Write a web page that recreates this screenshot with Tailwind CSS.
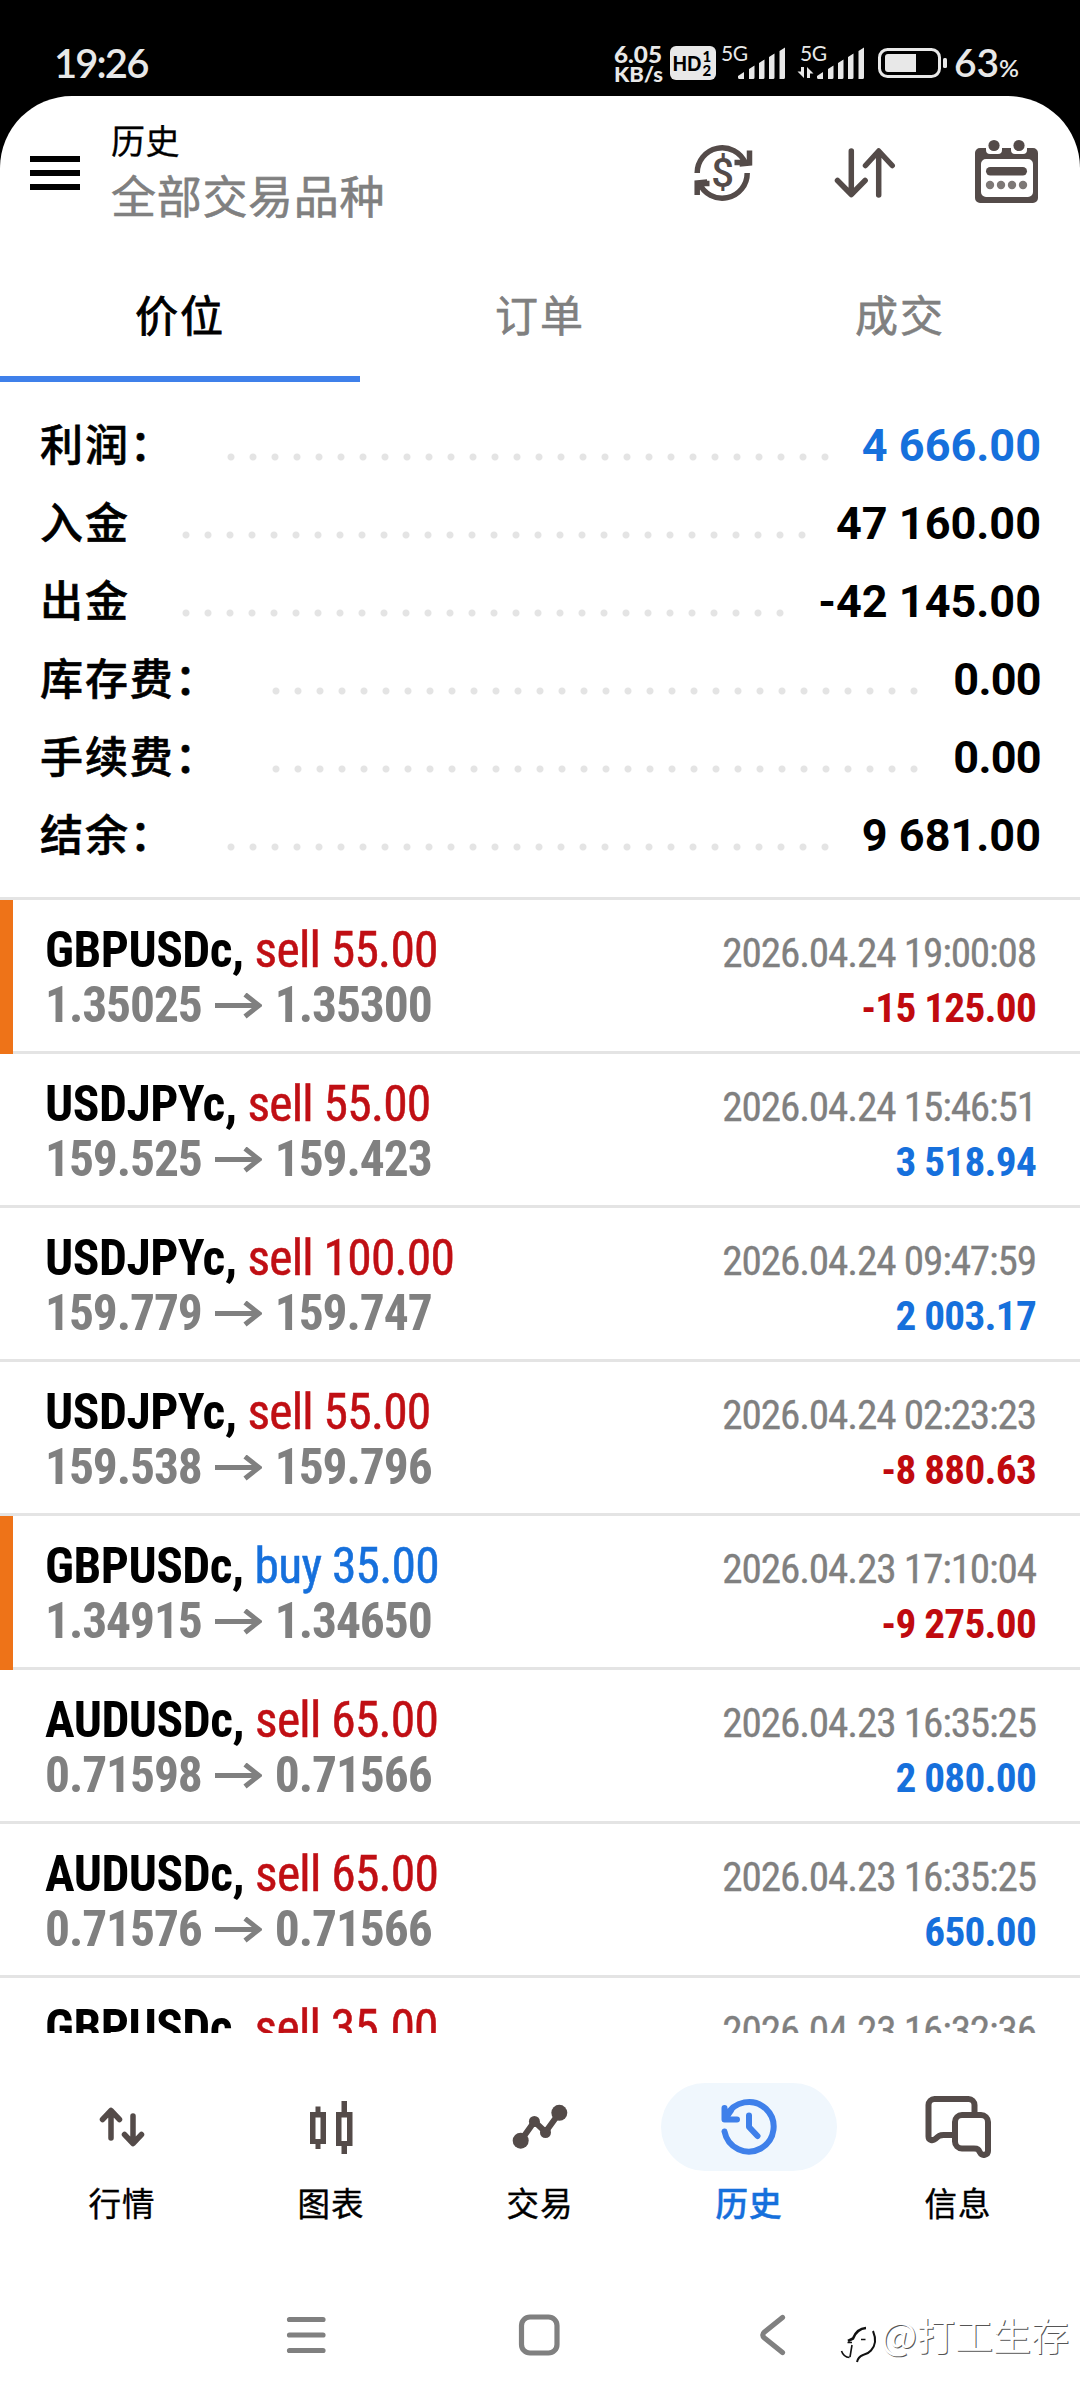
<!DOCTYPE html>
<html lang="zh-CN">
<head>
<meta charset="utf-8">
<title>历史</title>
<script src="https://cdn.jsdelivr.net/npm/@tailwindcss/browser@4"></script>
</head>
<body class="bg-black">
<div class="flex h-[2400px] w-[1080px] flex-col overflow-hidden bg-black font-['Noto_Sans_CJK_SC',sans-serif] text-black">

  <!-- Status bar -->
  <div class="flex h-[96px] shrink-0 items-start justify-between pl-[54px] text-[#e8e8e8]">
    <span class="pt-[39px] font-['Lato','Open_Sans',sans-serif] text-[40px] leading-[48px] font-semibold tracking-[-1.9px]">19:26</span>
    <svg class="h-[96px] w-[480px]" viewBox="600 0 480 96" fill="#e8e8e8">
      <g font-family="Lato, sans-serif" font-weight="900">
        <text x="614" y="63" font-size="23" textLength="48" lengthAdjust="spacingAndGlyphs">6.05</text>
        <text x="614" y="81.500" font-size="20.500" textLength="49" lengthAdjust="spacingAndGlyphs">KB/s</text>
      </g>
      <rect x="670" y="46" width="46" height="34" rx="6"/>
      <g font-family="Lato, sans-serif" font-weight="900" fill="#000">
        <text x="672.500" y="70.500" font-size="20.500" textLength="29" lengthAdjust="spacingAndGlyphs">HD</text>
        <text x="702.500" y="62" font-size="15">1</text>
        <text x="702.500" y="76" font-size="15">2</text>
      </g>
      <g font-family="Lato, sans-serif" font-weight="400" font-size="21">
        <text x="721" y="61" textLength="27">5G</text>
        <text x="800" y="61" textLength="27">5G</text>
      </g>
      <path d="M738 76l6-4v7h-4.500a1.500 1.500 0 0 1-1.500-1.500zM749 69l5.500-3.500V77.500a1.500 1.500 0 0 1-1.500 1.500h-4zM759 63l5.500-3.500V77.500a1.500 1.500 0 0 1-1.500 1.500h-4zM769 57l5.500-3.500V77.500a1.500 1.500 0 0 1-1.500 1.500h-4zM779.500 51l5.500-3.500V77.500a1.500 1.500 0 0 1-1.500 1.500h-4z"/>
      <path d="M817 76l6-4v7h-4.500a1.500 1.500 0 0 1-1.500-1.500zM828 69l5.500-3.500V77.500a1.500 1.500 0 0 1-1.500 1.500h-4zM838 63l5.500-3.500V77.500a1.500 1.500 0 0 1-1.500 1.500h-4zM848 57l5.500-3.500V77.500a1.500 1.500 0 0 1-1.500 1.500h-4zM858.500 51l5.500-3.500V77.500a1.500 1.500 0 0 1-1.500 1.500h-4z"/>
      <path d="M801 67h3v11l-6.500-6.500h3.500zM807 78h3v-4.500h3.500L807 67z"/>
      <rect x="879.500" y="49.500" width="60" height="27" rx="8" fill="none" stroke="#e8e8e8" stroke-width="3"/>
      <path d="M888 54h28v18h-28a3 3 0 0 1-3-3V57a3 3 0 0 1 3-3z"/>
      <rect x="943" y="58" width="4" height="10" rx="1.500"/>
      <g font-family="Lato, sans-serif" font-weight="600">
        <text x="954" y="77" font-size="39" textLength="45">63</text>
        <text x="999" y="77" font-size="23" textLength="20" lengthAdjust="spacingAndGlyphs">%</text>
      </g>
    </svg>
  </div>

  <div class="flex flex-1 flex-col overflow-hidden rounded-t-[72px] bg-white">
    <!-- App bar -->
    <header class="flex h-[160px] shrink-0 items-start">
      <div class="mt-[60px] ml-[30px] flex w-[50px] flex-col gap-2">
        <div class="h-[6px] bg-black"></div>
        <div class="h-[6px] bg-black"></div>
        <div class="h-[6px] bg-black"></div>
      </div>
      <div class="ml-[31px] flex flex-1 flex-col gap-[6px] pt-[23px]">
        <h1 class="text-[34px] leading-[42px] tracking-[0.5px] [-webkit-text-stroke:0.3px]">历史</h1>
        <p class="text-[45px] leading-[56px] tracking-[0.7px] text-[#808080] [-webkit-text-stroke:0.6px]">全部交易品种</p>
      </div>
      <svg class="h-[160px] w-[420px]" viewBox="660 96 420 160" fill="none" stroke="#544b49" stroke-width="5.500">
        <path d="M697.200 173a25 25 0 0 1 48-10M749.500 150.500V162.500H734.500M749.500 152v11l-10 1"/>
        <path d="M747.200 173a25 25 0 0 1-48 10M697.200 195V183.500H709.500M697.200 194v-11l10-1"/>
        <text x="722.500" y="187" text-anchor="middle" font-family="Roboto, sans-serif" font-size="40" font-weight="500" fill="#544b49" stroke="none">$</text>
        <g stroke-linecap="round" stroke-linejoin="round">
          <path d="M851.300 151v43M837.500 180.500l13.800 14 13.800-14M878.700 195v-43M865.500 165.500l13.200-14.500 13.500 14.500"/>
        </g>
        <g stroke="none">
          <path fill="#544b49" fill-rule="evenodd" d="M980 148h53a5 5 0 0 1 5 5v45a5 5 0 0 1-5 5h-53a5 5 0 0 1-5-5v-45a5 5 0 0 1 5-5zM986 159a5 5 0 0 0-5 5v28a5 5 0 0 0 5 5h42a5 5 0 0 0 5-5v-28a5 5 0 0 0-5-5z"/>
          <path fill="#fff" d="M986 146h16v4a4 4 0 0 1-4 4h-8a4 4 0 0 1-4-4zM1011 146h16v4a4 4 0 0 1-4 4h-8a4 4 0 0 1-4-4z"/>
          <g fill="#544b49">
            <circle cx="994" cy="145.500" r="5.600"/><circle cx="1019" cy="145.500" r="5.600"/>
            <rect x="986" y="167" width="41" height="8.500" rx="4.200"/>
          </g>
          <g fill="#7d7876">
            <circle cx="990" cy="185" r="4.200"/><circle cx="1001" cy="185" r="4.200"/><circle cx="1012" cy="185" r="4.200"/><circle cx="1023" cy="185" r="4.200"/>
          </g>
        </g>
      </svg>
    </header>

    <!-- Tabs -->
    <nav class="grid h-[126px] shrink-0 grid-cols-3 text-center text-[43px] leading-[115px] tracking-[1.9px] text-[#808080] [-webkit-text-stroke:0.6px]">
      <div class="border-b-[6px] border-[#3f80ea] text-black [-webkit-text-stroke:0.9px]">价位</div>
      <div>订单</div>
      <div>成交</div>
    </nav>

    <!-- Totals -->
    <section class="flex h-[515px] shrink-0 flex-col pt-[20px] pr-[39px] pl-[40px] text-[43px] font-medium tracking-[1.9px]">
      <div class="flex h-[78px] items-start">
        <span class="w-[180px] leading-[80px] [-webkit-text-stroke:0.6px]">利润：</span>
        <div class="mt-[44px] h-[22px] w-[616px] bg-[radial-gradient(circle,#e4e4e4_3px,transparent_4px)] bg-[length:22px_22px]"></div>
        <span class="flex-1 text-right font-['Roboto'] text-[45px] leading-[88px] font-bold tracking-normal whitespace-nowrap text-[#1670dc]">4 666.00</span>
      </div>
      <div class="flex h-[78px] items-start">
        <span class="w-[135px] leading-[80px] [-webkit-text-stroke:0.6px]">入金</span>
        <div class="mt-[44px] h-[22px] w-[638px] bg-[radial-gradient(circle,#e4e4e4_3px,transparent_4px)] bg-[length:22px_22px]"></div>
        <span class="flex-1 text-right font-['Roboto'] text-[45px] leading-[88px] font-bold tracking-normal whitespace-nowrap">47 160.00</span>
      </div>
      <div class="flex h-[78px] items-start">
        <span class="w-[135px] leading-[80px] [-webkit-text-stroke:0.6px]">出金</span>
        <div class="mt-[44px] h-[22px] w-[616px] bg-[radial-gradient(circle,#e4e4e4_3px,transparent_4px)] bg-[length:22px_22px]"></div>
        <span class="flex-1 text-right font-['Roboto'] text-[45px] leading-[88px] font-bold tracking-normal whitespace-nowrap">-42 145.00</span>
      </div>
      <div class="flex h-[78px] items-start">
        <span class="w-[225px] leading-[80px] [-webkit-text-stroke:0.6px]">库存费：</span>
        <div class="mt-[44px] h-[22px] w-[660px] bg-[radial-gradient(circle,#e4e4e4_3px,transparent_4px)] bg-[length:22px_22px]"></div>
        <span class="flex-1 text-right font-['Roboto'] text-[45px] leading-[88px] font-bold tracking-[-0.7px] whitespace-nowrap">0.00</span>
      </div>
      <div class="flex h-[78px] items-start">
        <span class="w-[225px] leading-[80px] [-webkit-text-stroke:0.6px]">手续费：</span>
        <div class="mt-[44px] h-[22px] w-[660px] bg-[radial-gradient(circle,#e4e4e4_3px,transparent_4px)] bg-[length:22px_22px]"></div>
        <span class="flex-1 text-right font-['Roboto'] text-[45px] leading-[88px] font-bold tracking-[-0.7px] whitespace-nowrap">0.00</span>
      </div>
      <div class="flex h-[78px] items-start">
        <span class="w-[180px] leading-[80px] [-webkit-text-stroke:0.6px]">结余：</span>
        <div class="mt-[44px] h-[22px] w-[616px] bg-[radial-gradient(circle,#e4e4e4_3px,transparent_4px)] bg-[length:22px_22px]"></div>
        <span class="flex-1 text-right font-['Roboto'] text-[45px] leading-[88px] font-bold tracking-normal whitespace-nowrap">9 681.00</span>
      </div>
    </section>

    <!-- Closed positions -->
    <main id="list" class="flex h-[1136px] shrink-0 flex-col overflow-hidden border-t-[3px] border-[#e4e4e4] font-['Roboto_Condensed'] text-[49.5px] leading-[55px] whitespace-pre"></main>

    <!-- Bottom navigation -->
    <nav class="flex h-[227px] shrink-0 px-[17.5px] pt-[50px] text-center text-[32.5px] leading-[42px] tracking-[0.9px] [-webkit-text-stroke:0.4px]">
      <div class="flex flex-1 flex-col items-center gap-[10px]">
        <svg class="h-[88px] w-[176px]" viewBox="34 2083 176 88" fill="none" stroke="#544b49" stroke-width="5.500" stroke-linecap="round" stroke-linejoin="round"><path d="M111 2138v-27M102.500 2119.500l8.500-9 8.500 9M133 2116v27M124.500 2134.500l8.500 9 8.500-9"/></svg>
        <span>行情</span>
      </div>
      <div class="flex flex-1 flex-col items-center gap-[10px]">
        <svg class="h-[88px] w-[176px]" viewBox="243 2083 176 88" fill="#544b49"><path fill-rule="evenodd" d="M315.500 2106.500h5v5.500h5.500v32h-5.500v5h-5v-5H310v-32h5.500zM315.500 2117.500v21.500h5v-21.500zM341.500 2101h5.500v11h5.500v34H347v8h-5.500v-8H336v-34h5.500zM341.500 2117.500v23.500h5.500v-23.500z"/></svg>
        <span>图表</span>
      </div>
      <div class="flex flex-1 flex-col items-center gap-[10px]">
        <svg class="h-[88px] w-[176px]" viewBox="452 2083 176 88" fill="#544b49"><path d="M520.700 2140.700L534.400 2121.500 545.500 2132 559.300 2113" fill="none" stroke="#544b49" stroke-width="6"/><circle cx="520.700" cy="2140.700" r="8"/><circle cx="534.400" cy="2121.500" r="5.500"/><circle cx="545.500" cy="2132.500" r="5.500"/><circle cx="559.300" cy="2112.800" r="8"/></svg>
        <span>交易</span>
      </div>
      <div class="flex flex-1 flex-col items-center gap-[10px]">
        <svg class="h-[88px] w-[176px] rounded-full bg-[#f0f7fd]" viewBox="661 2083 176 88" fill="none" stroke="#3f80ea" stroke-width="6" stroke-linecap="round" stroke-linejoin="round"><path d="M724.500 2131.500a24.800 24.800 0 1 0 2-15.500M724.500 2108v11.500h12.500M725 2119l6-8.500M749 2115.500v11.500l8.500 9"/></svg>
        <span class="font-medium text-[#1670dc] [-webkit-text-stroke:0.5px]">历史</span>
      </div>
      <div class="flex flex-1 flex-col items-center gap-[10px]">
        <svg class="h-[88px] w-[176px]" viewBox="870 2083 176 88" fill="none" stroke="#544b49" stroke-width="6" stroke-linejoin="round"><path d="M974.500 2113v-8a6 6 0 0 0-6-6h-34a6 6 0 0 0-6 6v31.500c0 4 4.500 4.500 7 2.300 3-2.800 4-3.800 8-3.800h11"/><path d="M962 2115h19a7 7 0 0 1 7 7v29c0 4-6 5.500-8 1.500-1.500-3-2-4-6-4h-12a7 7 0 0 1-7-7v-19.500a7 7 0 0 1 7-7z"/></svg>
        <span>信息</span>
      </div>
    </nav>

    <!-- System navigation and author mark -->
    <footer class="flex flex-1">
      <svg class="h-[140px] w-[830px] shrink-0" viewBox="0 2260 830 140" fill="none" stroke="#808080" stroke-width="5.200" stroke-linecap="round" stroke-linejoin="round"><path d="M289.500 2319.500h33.500M289.500 2335h33.500M289.500 2350.500h33.500M782.500 2317.500l-18 14.500q-3.500 3 0 6l18 14.500"/><rect x="521.500" y="2317" width="35.500" height="36" rx="8.500"/></svg>
      <div class="flex items-start pt-[50px]">
        <svg class="mt-[12px] h-[44px] w-[50px]" viewBox="830 2322 50 44" fill="none" stroke="#111"><path stroke-width="2.600" d="M848 2341l5-2.500q4-10 13-10.500"/><path stroke-width="1.600" d="M847.500 2342.500h4.500M861 2339.500h4.500M852 2345l-2 12M841.500 2351q2 6 8 6.500"/><path stroke-width="2" d="M873 2331q5 12-2 19.500-3 3.500-8 4.500-5 2-6 7"/></svg>
        <span class="ml-[1px] text-[38px] leading-[48px] text-white [text-shadow:1px_1px_0_#555]">@打工生存</span>
      </div>
    </footer>
  </div>
</div>

<script>
  const deals = [
    ['GBPUSDc', 'sell 55.00', '1.35025', '1.35300', '2026.04.24 19:00:08', '-15 125.00', true],
    ['USDJPYc', 'sell 55.00', '159.525', '159.423', '2026.04.24 15:46:51', '3 518.94', false],
    ['USDJPYc', 'sell 100.00', '159.779', '159.747', '2026.04.24 09:47:59', '2 003.17', false],
    ['USDJPYc', 'sell 55.00', '159.538', '159.796', '2026.04.24 02:23:23', '-8 880.63', false],
    ['GBPUSDc', 'buy 35.00', '1.34915', '1.34650', '2026.04.23 17:10:04', '-9 275.00', true],
    ['AUDUSDc', 'sell 65.00', '0.71598', '0.71566', '2026.04.23 16:35:25', '2 080.00', false],
    ['AUDUSDc', 'sell 65.00', '0.71576', '0.71566', '2026.04.23 16:35:25', '650.00', false],
    ['GBPUSDc', 'sell 35.00', null, null, '2026.04.23 16:32:36', null, false]
  ];
  document.getElementById('list').innerHTML = deals.map(([symbol, side, open, close, time, profit, marked]) =>
    `<article class="flex h-[154px] shrink-0">` +
      `<div class="w-[13px] ${marked ? 'bg-[#ee7318]' : 'border-b-[3px] border-[#e4e4e4]'}"></div>` +
      `<div class="flex flex-1 justify-between border-b-[3px] border-[#e4e4e4] pr-[44px] pl-[32px]">` +
        `<div class="pt-[23px]">` +
          `<div><span class="font-bold tracking-[-0.5px]">${symbol}, </span><span class="tracking-[-0.75px] [-webkit-text-stroke:0.5px] ${side[0] === 'b' ? 'text-[#1670dc]' : 'text-[#c00f14]'}">${side}</span></div>` +
          (open ? `<div class="flex items-center font-bold tracking-[-1.1px] text-[#808080]"><span>${open}</span>` +
            `<svg class="mr-[13px] ml-[13px] h-[26px] w-[47px]" viewBox="0 0 47 26" fill="none" stroke="#808080" stroke-width="5"><path d="M0 12.500h44M30 1.500l14 11-14 11"/></svg>` +
            `<span>${close}</span></div>` : '') +
        `</div>` +
        `<div class="pt-[26px] text-right text-[41.25px]">` +
          `<div class="tracking-[-1.15px] text-[#808080] [-webkit-text-stroke:0.3px]">${time}</div>` +
          (profit ? `<div class="font-bold tracking-[-0.75px] ${profit[0] === '-' ? 'text-[#c00a0f]' : 'text-[#1670dc]'}">${profit}</div>` : '') +
        `</div>` +
      `</div>` +
    `</article>`).join('');
</script>
</body>
</html>
